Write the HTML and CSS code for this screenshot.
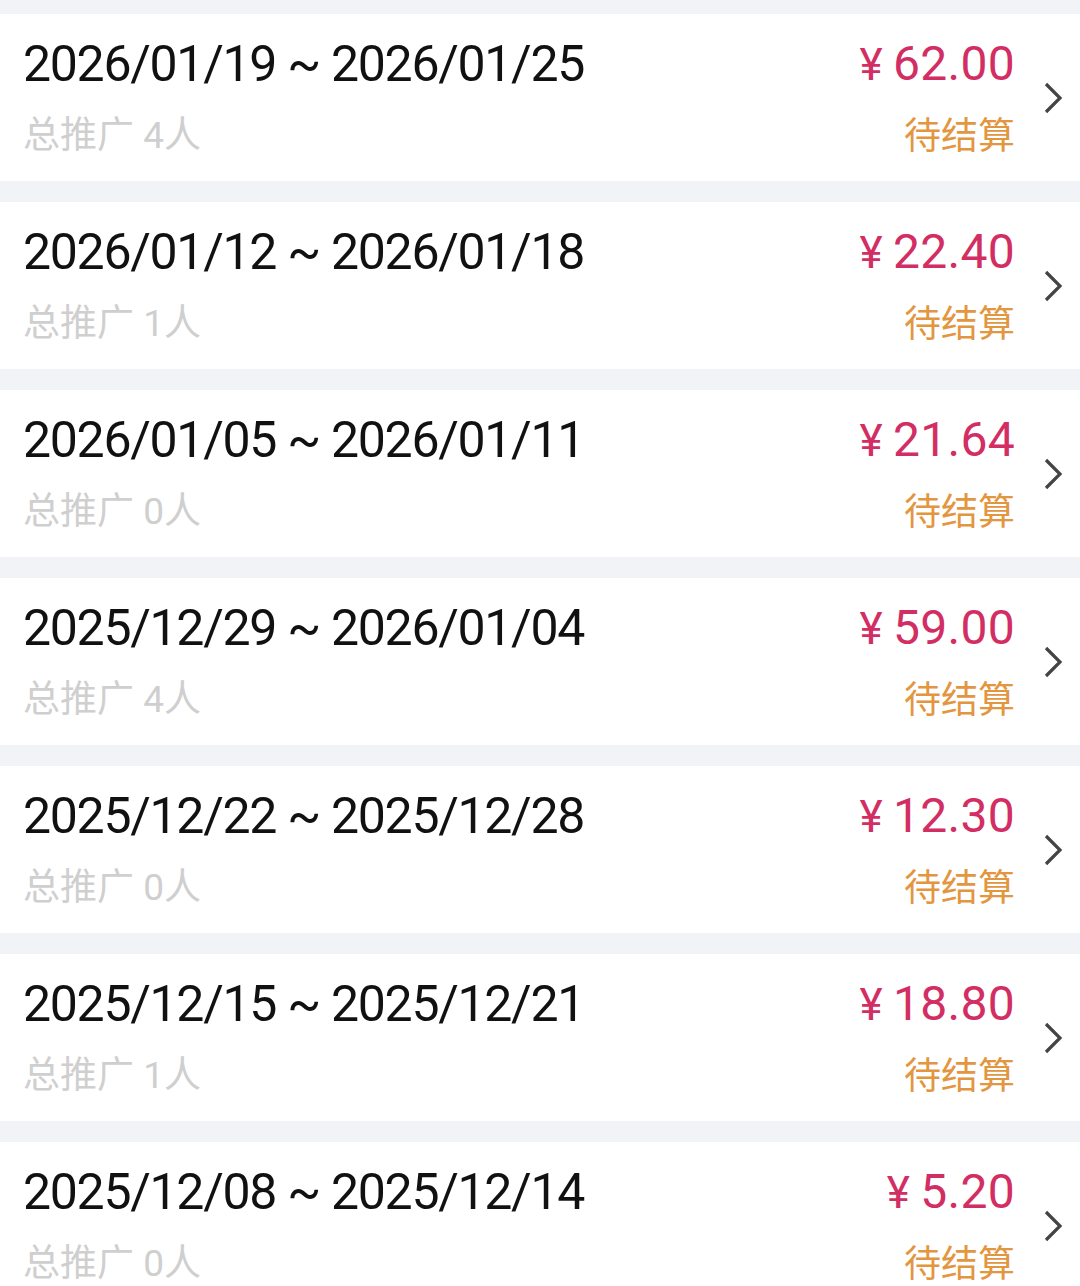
FILE: index.html
```html
<!DOCTYPE html>
<html lang="zh-CN">
<head>
  <meta charset="UTF-8" />
  <meta name="viewport" content="width=device-width, initial-scale=1.0" />
  <title>推广结算</title>
  <link rel="stylesheet" href="styles.css">
</head>
<body>
  <div class="list">
    <div class="row">
      <div class="info">
        <div class="period">2026/01/19 ~ 2026/01/25</div>
        <div class="count">总推广 4人</div>
      </div>
      <div class="money">
        <div class="amount"><span class="yen">¥</span>62.00</div>
        <div class="status">待结算</div>
      </div>
      <svg class="arrow" viewBox="0 0 20 34"><path d="M3 3 L17 17 L3 31" /></svg>
    </div>
    <div class="row">
      <div class="info">
        <div class="period">2026/01/12 ~ 2026/01/18</div>
        <div class="count">总推广 1人</div>
      </div>
      <div class="money">
        <div class="amount"><span class="yen">¥</span>22.40</div>
        <div class="status">待结算</div>
      </div>
      <svg class="arrow" viewBox="0 0 20 34"><path d="M3 3 L17 17 L3 31" /></svg>
    </div>
    <div class="row">
      <div class="info">
        <div class="period">2026/01/05 ~ 2026/01/11</div>
        <div class="count">总推广 0人</div>
      </div>
      <div class="money">
        <div class="amount"><span class="yen">¥</span>21.64</div>
        <div class="status">待结算</div>
      </div>
      <svg class="arrow" viewBox="0 0 20 34"><path d="M3 3 L17 17 L3 31" /></svg>
    </div>
    <div class="row">
      <div class="info">
        <div class="period">2025/12/29 ~ 2026/01/04</div>
        <div class="count">总推广 4人</div>
      </div>
      <div class="money">
        <div class="amount"><span class="yen">¥</span>59.00</div>
        <div class="status">待结算</div>
      </div>
      <svg class="arrow" viewBox="0 0 20 34"><path d="M3 3 L17 17 L3 31" /></svg>
    </div>
    <div class="row">
      <div class="info">
        <div class="period">2025/12/22 ~ 2025/12/28</div>
        <div class="count">总推广 0人</div>
      </div>
      <div class="money">
        <div class="amount"><span class="yen">¥</span>12.30</div>
        <div class="status">待结算</div>
      </div>
      <svg class="arrow" viewBox="0 0 20 34"><path d="M3 3 L17 17 L3 31" /></svg>
    </div>
    <div class="row">
      <div class="info">
        <div class="period">2025/12/15 ~ 2025/12/21</div>
        <div class="count">总推广 1人</div>
      </div>
      <div class="money">
        <div class="amount"><span class="yen">¥</span>18.80</div>
        <div class="status">待结算</div>
      </div>
      <svg class="arrow" viewBox="0 0 20 34"><path d="M3 3 L17 17 L3 31" /></svg>
    </div>
    <div class="row">
      <div class="info">
        <div class="period">2025/12/08 ~ 2025/12/14</div>
        <div class="count">总推广 0人</div>
      </div>
      <div class="money">
        <div class="amount"><span class="yen">¥</span>5.20</div>
        <div class="status">待结算</div>
      </div>
      <svg class="arrow" viewBox="0 0 20 34"><path d="M3 3 L17 17 L3 31" /></svg>
    </div>
  </div>
</body>
</html>
```

FILE: styles.css
```css
* {
  margin: 0;
  padding: 0;
  box-sizing: border-box;
}

body {
  font-family: Roboto, "Noto Sans CJK SC", sans-serif;
  background: #f2f3f7;
  height: 1286px;
  overflow: hidden;
}

.list {
  padding-top: 14px;
}

.row {
  background: #fff;
  height: 167px;
  margin-bottom: 21px;
  display: flex;
  align-items: center;
  padding: 0 17px 0 23px;
}

.info {
  flex: 1;
}

.period {
  font-size: 50px;
  line-height: 60px;
  letter-spacing: -1.3px;
  color: #111;
}

.count {
  font-size: 37px;
  line-height: 50px;
  margin-top: 17px;
  color: #cfcfcf;
}

.money {
  text-align: right;
}

.amount {
  font-size: 48px;
  line-height: 60px;
  letter-spacing: 0.3px;
  color: #d22e63;
}

.yen {
  font-size: 44px;
  margin-right: 10px;
}

.status {
  font-size: 37px;
  line-height: 50px;
  margin-top: 17px;
  color: #e39640;
}

.arrow {
  width: 20px;
  height: 34px;
  margin-left: 28px;
  fill: none;
  stroke: #444;
  stroke-width: 3.2;
}
```
